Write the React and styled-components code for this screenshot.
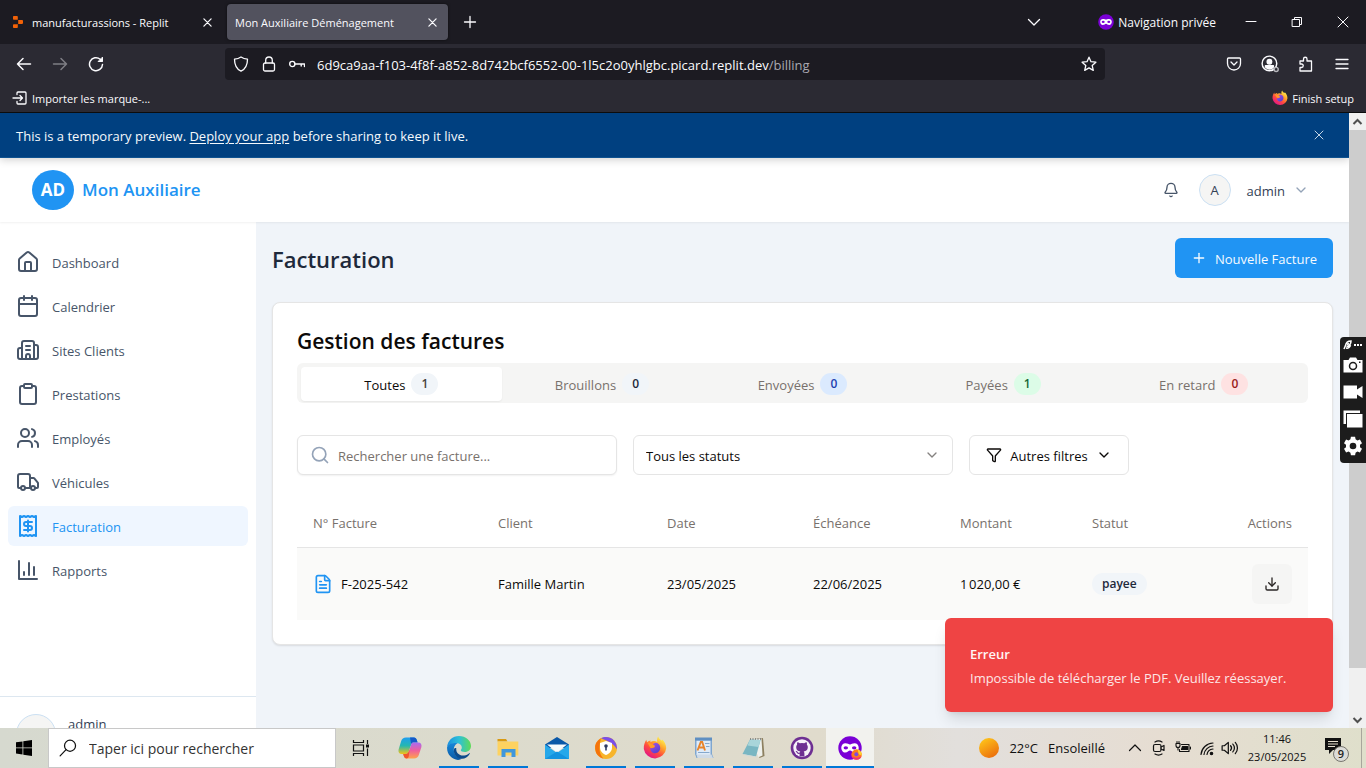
import React from 'react';
import styled, { createGlobalStyle } from 'styled-components';
import {
  House, Calendar, Building2, Clipboard, Users, Truck, Receipt, Bell, ChevronDown,
  Plus, Search, Funnel, FileText, Download, X,
} from 'lucide-react';

const GlobalStyle = createGlobalStyle`
  *, *::before, *::after { box-sizing: border-box; }
  html, body, #root { height: 100%; }
  body {
    margin: 0;
    overflow: hidden;
    font-family: "Segoe UI", "Open Sans", "Noto Sans", sans-serif;
    font-size: 13px;
    line-height: 20px;
    color: #0c0a09;
  }
  button, input, select { font: inherit; color: inherit; }
  button { border: 0; padding: 0; background: none; }
  svg { display: block; flex: none; }
  h1, h2, p { margin: 0; }
`;

const Desktop = styled.div`
  display: flex;
  flex-direction: column;
  height: 100vh;
`;

/* Text beside an icon: the padding lines the letters up with the icon's middle. */
const Label = styled.span`
  padding-top: 2px;
`;

/* ---------- Browser chrome ---------- */

const Chrome = styled.header`
  flex: none;
  background: #2b2a33;
  color: #fbfbfe;
  font-size: 11px;
  border-bottom: 1px solid #0c0c0d;
`;

const TabStrip = styled.div`
  display: flex;
  align-items: center;
  height: 44px;
  background: #1c1b22;
`;

const BrowserTab = styled.div`
  display: flex;
  align-items: center;
  gap: 8px;
  width: ${(p) => (p.$active ? 221 : 223)}px;
  height: 36px;
  padding: 0 8px 0 ${(p) => (p.$active ? 8 : 12)}px;
  margin-right: 4px;
  border-radius: 4px;
  white-space: nowrap;
  background: ${(p) => (p.$active ? '#52525e' : 'transparent')};
  box-shadow: ${(p) => (p.$active ? '0 0 3px rgba(0,0,0,.6)' : 'none')};
`;

const TabLabel = styled(Label)`
  flex: 1;
  overflow: hidden;
`;

const ChromeButton = styled.button`
  display: grid;
  place-items: center;
  width: ${(p) => p.$w || 36}px;
  height: ${(p) => p.$h || 32}px;
  flex: none;
  opacity: ${(p) => (p.$dim ? 0.4 : 1)};
`;

const Spacer = styled.div`
  flex: 1;
`;

const PrivateBadge = styled.div`
  display: flex;
  align-items: center;
  gap: 4px;
  margin: 0 12px 0 46px;
  font-size: 12px;
`;

const NavBar = styled.div`
  display: flex;
  align-items: center;
  height: 40px;
`;

const NavGroup = styled.div`
  display: flex;
  width: 225px;
  padding-left: 6px;
`;

const AddressBar = styled.div`
  flex: 1;
  display: flex;
  align-items: center;
  height: 32px;
  padding: 0 8px;
  gap: 12px;
  border-radius: 4px;
  background: #1c1b22;
`;

const Address = styled.label`
  flex: 1;
  display: flex;
  padding-top: 2px;
  font-size: 13px;
  color: #a9a9b0;
`;

const AddressInput = styled.input`
  field-sizing: content;
  border: 0;
  padding: 0;
  background: none;
  outline: 0;
  color: #fbfbfe;
`;

const NavTools = styled.div`
  display: flex;
  justify-content: flex-end;
  width: 261px;
  padding-right: 6px;
`;

const BookmarkBar = styled.div`
  display: flex;
  align-items: center;
  justify-content: space-between;
  height: 28px;
  padding: 0 12px;
`;

const Bookmark = styled.button`
  display: flex;
  align-items: center;
  gap: 4px;
`;

/* ---------- Page viewport ---------- */

const Viewport = styled.div`
  position: relative;
  flex: 1;
  min-height: 0;
  display: flex;
`;

const Page = styled.div`
  position: relative;
  flex: 1;
  min-width: 0;
  display: flex;
  flex-direction: column;
  overflow: hidden;
  background: #f0f4f9;
`;

const Banner = styled.div`
  position: relative;
  z-index: 2;
  flex: none;
  display: flex;
  align-items: center;
  justify-content: space-between;
  height: 45px;
  padding: 0 20px 0 16px;
  background: #004080;
  border-bottom: 1px solid #0f5391;
  color: #f5f9fc;
  box-shadow: 0 2px 8px rgba(0, 0, 0, 0.18);
  a { color: inherit; text-underline-offset: 2px; }
`;

const BannerClose = styled.button`
  display: grid;
  place-items: center;
  width: 20px;
  height: 20px;
  color: #c5d6e6;
`;

const TopBar = styled.div`
  position: relative;
  z-index: 1;
  flex: none;
  display: flex;
  align-items: center;
  height: 64px;
  padding: 0 40px 0 32px;
  background: #fff;
  box-shadow: 0 1px 2px rgba(0, 0, 0, 0.06);
`;

const Logo = styled.span`
  display: grid;
  place-items: center;
  width: 42px;
  height: 40px;
  border-radius: 50%;
  background: #2094f3;
  color: #fff;
  font-size: 17px;
  font-weight: 700;
`;

const Brand = styled.span`
  margin-left: 8px;
  color: #2094f3;
  font-size: 17px;
  font-weight: 600;
`;

const Avatar = styled.span`
  display: grid;
  place-items: center;
  width: ${(p) => p.$size}px;
  height: ${(p) => p.$size}px;
  border: 1px solid #cbe0f3;
  border-radius: 50%;
  background: #f5f5f4;
  flex: none;
`;

const IconButton = styled.button`
  color: #475569;
  margin-right: 20px;
`;

const UserMenu = styled.button`
  display: flex;
  align-items: center;
  color: #334155;
  ${Label} { margin: 0 8px 0 16px; }
  > svg { color: #94a3b8; }
`;

const Body = styled.div`
  flex: 1;
  min-height: 0;
  display: flex;
`;

/* The sidebar is as tall as the whole app, which the banner pushes down. */
const Sidebar = styled.aside`
  flex: none;
  display: flex;
  flex-direction: column;
  width: 256px;
  height: calc(100% + 45px);
  background: #fff;
`;

const SideNav = styled.nav`
  flex: 1;
  display: flex;
  flex-direction: column;
  gap: 4px;
  padding: 20px 8px;
`;

const SideLink = styled.a`
  display: flex;
  align-items: center;
  gap: 12px;
  height: 40px;
  padding: 0 8px;
  border-radius: 6px;
  text-decoration: none;
  color: ${(p) => (p.$active ? '#2094f3' : '#475569')};
  background: ${(p) => (p.$active ? '#eff6ff' : 'transparent')};
`;

const SideFooter = styled.div`
  display: flex;
  align-items: flex-start;
  gap: 12px;
  height: 77px;
  padding: 17px 16px;
  border-top: 1px solid #dde7f0;
  color: #334155;
`;

const Main = styled.main`
  flex: 1;
  min-width: 0;
  padding: 16px;
`;

const PageHead = styled.div`
  display: flex;
  align-items: center;
  justify-content: space-between;
  margin-bottom: 24px;
`;

const PageTitle = styled.h1`
  padding-top: 2px;
  font-size: 22px;
  line-height: 32px;
  font-weight: 600;
  color: #1e293b;
`;

const PrimaryButton = styled.button`
  display: flex;
  align-items: center;
  gap: 8px;
  height: 40px;
  padding: 0 16px;
  border-radius: 6px;
  background: #2094f3;
  color: #f5faff;
`;

const Card = styled.section`
  padding: 24px;
  border: 1px solid #e5e5e5;
  border-radius: 8px;
  background: #fff;
  box-shadow: 0 1px 2px rgba(0, 0, 0, 0.1);
`;

const CardTitle = styled.h2`
  font-size: 21px;
  line-height: 28px;
  font-weight: 600;
  margin-bottom: 8px;
`;

const Tabs = styled.div`
  display: grid;
  grid-template-columns: repeat(5, 1fr);
  height: 40px;
  padding: 4px 4px 2px;
  border-radius: 6px;
  background: #f5f5f4;
`;

const Tab = styled.button`
  display: flex;
  align-items: center;
  justify-content: center;
  gap: 6px;
  border-radius: 4px;
  color: ${(p) => (p.$active ? '#0c0a09' : '#78716c')};
  background: ${(p) => (p.$active ? '#fff' : 'transparent')};
  box-shadow: ${(p) => (p.$active ? '0 1px 2px rgba(0,0,0,.06)' : 'none')};
`;

const Pill = styled.span`
  display: inline-block;
  padding: 0 10px;
  border-radius: 11px;
  font-size: 12px;
  line-height: 22px;
  font-weight: 600;
  color: ${(p) => p.$fg};
  background: ${(p) => p.$bg};
`;

const Filters = styled.div`
  display: flex;
  gap: 16px;
  margin: 32px 0 24px;
`;

const Field = styled.label`
  display: flex;
  align-items: center;
  gap: 8px;
  width: 320px;
  height: 40px;
  padding: 0 12px;
  border: 1px solid #e5e5e5;
  border-radius: 6px;
  background: #fff;
  box-shadow: ${(p) => (p.$raised ? '0 1px 2px rgba(0,0,0,.06)' : 'none')};
  input, select {
    flex: 1;
    min-width: 0;
    border: 0;
    padding: 2px 0 0;
    outline: 0;
    appearance: none;
    background: none;
  }
  input::placeholder { color: #78716c; opacity: 1; }
`;

const OutlineButton = styled.button`
  display: flex;
  align-items: center;
  justify-content: center;
  gap: 8px;
  width: 160px;
  height: 40px;
  border: 1px solid #e5e5e5;
  border-radius: 6px;
  background: #fff;
`;

const Table = styled.table`
  width: 100%;
  table-layout: fixed;
  border-collapse: collapse;
  text-align: left;
  th {
    height: 48px;
    padding: 0 16px;
    font-weight: 400;
    color: #78716c;
    border-bottom: 1px solid #e5e5e5;
  }
  td {
    height: 73px;
    padding: 0 16px;
    background: #fafaf9;
  }
  th:last-child, td:last-child { text-align: right; }
`;

const InvoiceRef = styled.span`
  display: flex;
  align-items: center;
  gap: 8px;
  svg { color: #2094f3; }
`;

const RowButton = styled.button`
  display: inline-grid;
  place-items: center;
  width: 40px;
  height: 40px;
  vertical-align: middle;
  border-radius: 6px;
  background: #f5f5f4;
  color: #292524;
`;

const Toast = styled.div`
  position: absolute;
  z-index: 3;
  right: 16px;
  bottom: 16px;
  width: 388px;
  padding: 26px 25px 24px;
  border-radius: 6px;
  background: #ef4444;
  color: #fde6e6;
  box-shadow: 0 10px 15px -3px rgba(0, 0, 0, 0.12), 0 4px 6px -4px rgba(0, 0, 0, 0.12);
  strong {
    display: block;
    margin-bottom: 4px;
    font-weight: 600;
    color: #fff5f5;
  }
`;

const ScrollBar = styled.div`
  flex: none;
  display: flex;
  flex-direction: column;
  width: 17px;
  background: #f0f0f0;
  color: #505050;
`;

const ScrollArrow = styled.button`
  display: grid;
  place-items: center;
  height: 17px;
`;

const ScrollTrack = styled.div`
  flex: 1;
`;

const ScrollThumb = styled.div`
  height: calc(93% - 2px);
  background: #cdcdcd;
`;

const Recorder = styled.div`
  position: absolute;
  z-index: 4;
  right: 0;
  top: 224px;
  display: flex;
  flex-direction: column;
  width: 26px;
  height: 126px;
  padding: 2px 0 4px;
  border-radius: 4px 0 0 4px;
  background: #1c1c1c;
  color: #fff;
`;

const RecorderButton = styled.button`
  flex: ${(p) => (p.$small ? '0 0 12px' : 1)};
  display: grid;
  place-items: center;
`;

/* ---------- Taskbar ---------- */

const Taskbar = styled.footer`
  flex: none;
  display: flex;
  align-items: center;
  height: 40px;
  background: linear-gradient(90deg, #d6d9cf 0%, #dcdbcd 35%, #e0dbcc 60%, #e2dfdc 70%, #e6ddd2 85%, #dfdfcb 100%);
  color: #111;
`;

const TaskButton = styled.button`
  position: relative;
  display: grid;
  place-items: center;
  width: ${(p) => p.$w || 49}px;
  height: 40px;
  flex: none;
  background: ${(p) => (p.$active ? '#f2f2ee' : 'none')};
  &::after {
    content: '';
    position: absolute;
    left: ${(p) => (p.$active ? 0 : 5)}px;
    right: ${(p) => (p.$active ? 0 : 4)}px;
    bottom: 0;
    height: 2px;
    background: ${(p) => (p.$running ? '#0078d7' : 'transparent')};
  }
`;

const TaskSearch = styled.label`
  display: flex;
  align-items: center;
  gap: 12px;
  width: 288px;
  height: 40px;
  padding: 0 10px;
  border: 1px solid #c8c8c8;
  background: #fff;
  font-size: 14px;
  input {
    flex: 1;
    min-width: 0;
    border: 0;
    padding: 2px 0 0;
    outline: 0;
    background: none;
  }
  input::placeholder { color: #333; opacity: 1; }
`;

const Weather = styled.button`
  display: flex;
  align-items: center;
  gap: 10px;
  margin-right: 18px;
`;

const Tray = styled.div`
  display: flex;
  align-items: center;
`;

const Clock = styled.button`
  width: 72px;
  font-size: 11px;
  line-height: 18px;
  text-align: center;
  span { display: block; }
`;

const ShowDesktop = styled.button`
  width: 5px;
  height: 40px;
  border-left: 1px solid #a8a69c;
`;

/* ---------- Drawings ---------- */

const Line = ({ size = 16, w = 1.3, children, ...rest }) => (
  <svg width={size} height={size} viewBox="0 0 16 16" fill="none" stroke="currentColor"
    strokeWidth={w} strokeLinecap="round" strokeLinejoin="round" aria-hidden="true" {...rest}>
    {children}
  </svg>
);

const ReplitMark = () => (
  <svg width="12" height="12" viewBox="0 0 12 12" fill="#f26207" aria-hidden="true">
    <path d="M1.800 0h3.200c.5 0 .8.3.8.8v2.900H1.800a.8.8 0 0 1-.8-.8V.8c0-.5.3-.8.8-.8zM6.200 4.100h4c.5 0 .8.3.8.8v2.200c0 .5-.3.8-.8.8h-4zM1.800 8.300h4v2.900c0 .5-.3.8-.8.8H1.800a.8.8 0 0 1-.8-.8V9.100c0-.5.3-.8.8-.8z" />
  </svg>
);

const CloseMark = ({ size = 9, w = 1.4 }) => (
  <svg width={size} height={size} viewBox="0 0 10 10" stroke="currentColor" strokeWidth={w} strokeLinecap="round" aria-hidden="true">
    <path d="M1 1l8 8M9 1L1 9" />
  </svg>
);

const MaskMark = ({ size = 16, fox }) => (
  <svg width={size} height={size} viewBox="0 0 16 16" aria-hidden="true">
    <circle cx="8" cy="8" r="7.800" fill="#7a00d6" />
    <path d="M5 4.900c1.400 0 2.200.7 3 .7s1.600-.7 3-.7c1.700 0 2.800 1.300 2.800 2.900S12.700 11 11.200 11C9.600 11 9 9.700 8 9.700S6.400 11 4.800 11C3.300 11 2.200 9.400 2.200 7.800S3.300 4.900 5 4.900z" fill="#fff" />
    <ellipse cx="5.200" cy="7.900" rx="1.500" ry="1.100" fill="#7a00d6" />
    <ellipse cx="10.800" cy="7.900" rx="1.500" ry="1.100" fill="#7a00d6" />
    {fox && (
      <g>
        <circle cx="12.400" cy="12.400" r="3.500" fill="#ff7a1c" />
        <path d="M13 8.600c2 1 3 2.500 2.900 4.200l-2-.4z" fill="#ffcf2e" />
        <path d="M9.100 13.500a3.500 3.500 0 0 0 6.500.2c-2 1-4.500 1-6.500-.2z" fill="#f0307a" />
        <circle cx="12.200" cy="12.200" r="1.300" fill="#7b4be0" />
      </g>
    )}
  </svg>
);

const FoxMark = ({ size = 16, id }) => (
  <svg width={size} height={size} viewBox="0 0 24 24" aria-hidden="true">
    <defs>
      <linearGradient id={`${id}a`} x1=".85" y1=".1" x2=".25" y2=".95">
        <stop offset="0" stopColor="#fff44f" />
        <stop offset=".35" stopColor="#ffa02b" />
        <stop offset=".65" stopColor="#ff4a3f" />
        <stop offset="1" stopColor="#e31587" />
      </linearGradient>
      <linearGradient id={`${id}b`} x1="0" y1="0" x2=".6" y2="1">
        <stop offset="0" stopColor="#a253e8" />
        <stop offset="1" stopColor="#5a3fd0" />
      </linearGradient>
    </defs>
    <path d="M15.200.6c.6 2 1.800 2.800 3.400 4 .4-.2.600-.6.600-1.200 2.500 2.200 4 5.400 4 8.800A11.300 11.300 0 0 1 .8 12.900C.5 9.200 2 5.800 3.300 3.800c.1 1 .5 1.900 1 2.400C5.400 5 6.600 4.600 8 4.700c-.5.4-.8.900-.8 1.500 2.500-1.500 5-1.600 7-.2-.4-2 .1-4.200 1-5.400z" fill={`url(#${id}a)`} />
    <path d="M12.500 6.800c3 .3 4.900 2.700 4.700 5.500-.2 3-2.600 5-5.300 4.900-3-.1-4.900-2.600-4.600-5.300 1.500.9 2.700.3 4.200-.6.500-.6-.4-1.300-1.800-1.600.2-1.300 1.200-2.600 2.800-2.900z" fill={`url(#${id}b)`} />
    <path d="M4.300 6.200c2 .6 4 1.300 7.300 3.200.7.500.2 1.400-.6 1.800-1.200.6-2.500 1-3.700.5" fill="#ff9a2a" />
  </svg>
);

const PageArrow = ({ up }) => (
  <svg width="11" height="8" viewBox="0 0 11 8" fill="none" stroke="currentColor" strokeWidth="2" aria-hidden="true">
    <path d={up ? 'M1.500 6L5.500 2l4 4' : 'M1.500 2l4 4 4-4'} />
  </svg>
);

const BarChartMark = () => (
  <svg width="24" height="24" viewBox="0 0 24 24" fill="none" stroke="currentColor" strokeWidth="2" strokeLinecap="round" strokeLinejoin="round" aria-hidden="true">
    <path d="M3 3v18h18M18 17V9M13 17V5M8 17v-3" />
  </svg>
);

const CopilotMark = () => (
  <svg width="24" height="24" viewBox="0 0 24 24" aria-hidden="true">
    <defs>
      <linearGradient id="cpA" x1="0" y1="0" x2="0" y2="1">
        <stop offset="0" stopColor="#1f9df0" /><stop offset=".5" stopColor="#25b8b0" /><stop offset="1" stopColor="#f2c318" />
      </linearGradient>
      <linearGradient id="cpB" x1="0" y1="0" x2="0" y2="1">
        <stop offset="0" stopColor="#a86cf2" /><stop offset=".5" stopColor="#ef5f9c" /><stop offset="1" stopColor="#ffa24a" />
      </linearGradient>
    </defs>
    <path d="M8 1.500h8c1.500 0 2.300 1 2.800 2.500l.8 2.500h-4c-1.200 0-2 .6-2.400 1.900L11 15c-.7 2-1.600 3-3.500 3H3.800C1.200 18 0 16 .6 13.400L3.200 5C4 2.700 5.300 1.500 8 1.500z" fill="url(#cpA)" />
    <path d="M12 1.500h4c1.500 0 2.300 1 2.800 2.500l.8 2.500h-4c-1.200 0-2 .6-2.400 1.900z" fill="#1559c8" />
    <path d="M16 22.500H8.500c-1.500 0-2.200-1-2.700-2.500L5.200 18h2.300c1.900 0 2.800-1 3.500-3l2.200-6.600c.4-1.300 1.200-1.900 2.400-1.900h4.600c2.600 0 3.800 2 3.200 4.600L20.800 19c-.8 2.300-2.100 3.500-4.800 3.500z" fill="url(#cpB)" />
    <path d="M5.200 18h2.300c1.900 0 2.800-1 3.500-3l.6-1.600-.8 6.600c-.2 1.600-.8 2.500-2.300 2.500s-2.200-1-2.700-2.500z" fill="#f0562b" />
  </svg>
);

const EdgeMark = () => (
  <svg width="24" height="24" viewBox="0 0 24 24" aria-hidden="true">
    <defs>
      <linearGradient id="edA" x1="0" y1=".3" x2="1" y2=".3">
        <stop offset="0" stopColor="#1a8fe0" /><stop offset=".5" stopColor="#2dc0d8" /><stop offset="1" stopColor="#5fdb55" />
      </linearGradient>
      <linearGradient id="edB" x1="0" y1="0" x2="0" y2="1">
        <stop offset="0" stopColor="#1687d9" /><stop offset="1" stopColor="#0c59a4" />
      </linearGradient>
    </defs>
    <path d="M.1 11C.6 4.500 5.700 0 12 0c6.800 0 12 4.500 12 10 0 3.700-2.800 6-6.200 6-2.500 0-4-.8-4-1.700 0-.6 1-1 1-2.800 0-2.200-2-4.200-5.300-4.200C5 7.300 1.300 8.800.1 11z" fill="url(#edA)" />
    <path d="M.1 11c1-2.500 4-4 7.500-4 1 0 2 .1 3 .5-2.500.8-4 3.500-3.800 6.500.2 4.200 3.500 8 8.200 8.500-1 .9-2.300 1.300-4 1.400C5 23.600-.5 18.500.1 11z" fill="url(#edB)" />
    <path d="M9.300 12.300c-.7 4.700 3.500 7.900 8 7.200 2-.3 3.700-1.200 5-2.300.4-.3.800.1.500.5-2 3.300-4.700 5-7.800 5-5 0-8.200-4.200-8.200-8.200 0-2 .9-3.200 2.500-2.200z" fill="#0d4c8c" />
  </svg>
);

const FolderMark = () => (
  <svg width="24" height="24" viewBox="0 0 24 24" aria-hidden="true">
    <path d="M1.500 3h8.500l1.500 2.500h-10z" fill="#d99a12" />
    <path d="M1.500 5.500h20.800v14H1.500z" fill="#fdd260" />
    <path d="M5.500 13h14v8h-4v-4.500h-6V21h-4z" fill="#3f97dc" />
  </svg>
);

const MailMark = () => (
  <svg width="26" height="24" viewBox="0 0 26 24" aria-hidden="true">
    <path d="M1 8.500L13 1l12 7.500V12H1z" fill="#0a58a8" />
    <path d="M3 8.500h20l-10 8z" fill="#f7fafc" />
    <path d="M1 8.500L13 17l12-8.500V23H1z" fill="#26a8ea" />
    <path d="M1 23l12-7.500L25 23z" fill="#1493df" />
  </svg>
);

const ShieldBrowserMark = () => (
  <svg width="24" height="24" viewBox="0 0 24 24" aria-hidden="true">
    <circle cx="12" cy="12" r="11" fill="#f7b52c" />
    <path d="M12 1a11 11 0 0 1 10.900 12.300C20 8 15 5.500 7 2.300 8.500 1.500 10.200 1 12 1z" fill="#7a4fe8" />
    <path d="M7 2.300A11 11 0 0 0 9.500 22.700C5 18 4.500 12 7 2.300z" fill="#f5740d" />
    <path d="M12 5l6 2v4.500c0 3.500-2.500 6-6 7.500-3.500-1.500-6-4-6-7.500V7z" fill="#fff" />
    <circle cx="12" cy="10" r="1.800" fill="#2d3b63" />
    <path d="M11.200 10.500h1.600v4h-1.600z" fill="#2d3b63" />
  </svg>
);

const WordPadMark = () => (
  <svg width="24" height="24" viewBox="0 0 24 24" aria-hidden="true">
    <path d="M3 2h17v16l1.500 4H4.500L3 18z" fill="#7fa6cf" />
    <path d="M4.500 4.500h14V19h-14z" fill="#dfebf8" />
    <path d="M3 1.500h17v3H3z" fill="#5f8fc2" />
    <path d="M5.500 14.500L8.800 6h1.400l2.800 8.500M7 11.500h4.500" stroke="#e8842c" strokeWidth="1.900" fill="none" />
    <path d="M13 7.500h4.500M14 10.500h3.500M6 16.500h11.500" stroke="#86a8cc" />
    <path d="M4.500 18.500h15L21 22H5.500z" fill="#cfdae6" />
  </svg>
);

const NotepadMark = () => (
  <svg width="24" height="24" viewBox="0 0 24 24" aria-hidden="true">
    <path d="M10 3.500L22 2l1.500 18-5 2z" fill="#8d8061" />
    <path d="M9.500 3.500l11-1 1 17-4 1.800z" fill="#eef0ec" />
    <path d="M9 3.500L19.500 4 15 20.500 1.500 18z" fill="#79b6c2" />
    <path d="M9 3.500L19.500 4l-2 7-11-1.500z" fill="#a9d5da" />
    <path d="M1.500 18L15 20.500l2.500 1-12-1.500z" fill="#cfd9d8" />
    <path d="M9.500 2v2M12 2v2M14.500 2v2M17 2v2M19.500 2v2" stroke="#777" strokeWidth=".8" />
  </svg>
);

const GitHubDesktopMark = () => (
  <svg width="24" height="24" viewBox="0 0 24 24" aria-hidden="true">
    <circle cx="12" cy="12" r="11.300" fill="#6e2f92" />
    <circle cx="12" cy="12" r="8.700" fill="#f6f1f9" />
    <path d="M9.600 20.300v-2.500c-2 .4-2.700-.6-3.200-1.700-.3-.5-.8-.8-.8-.9.900-.5 1.700.3 2.200 1 .5.700 1.200.7 1.900.4.100-.5.300-.9.600-1.100-2.300-.3-4.100-1.200-4.100-4.400 0-1 .3-1.800.9-2.400-.1-.6-.1-1.500.2-2.400.9 0 1.700.4 2.500 1a8 8 0 0 1 4.400 0c.8-.6 1.600-1 2.500-1 .3.900.3 1.800.2 2.400.6.600.9 1.400.9 2.400 0 3.200-1.800 4.100-4.100 4.400.4.400.7 1 .7 1.800v3z" fill="#6e2f92" />
  </svg>
);

const tasks = [
  ['Copilot', <CopilotMark />, false],
  ['Microsoft Edge', <EdgeMark />, true],
  ['Explorateur de fichiers', <FolderMark />, true],
  ['Courrier', <MailMark />, false],
  ['Navigateur sécurisé', <ShieldBrowserMark />, true],
  ['Firefox', <FoxMark size={24} id="foxTask" />, true],
  ['WordPad', <WordPadMark />, true],
  ['Bloc-notes', <NotepadMark />, true],
  ['GitHub Desktop', <GitHubDesktopMark />, true],
];

const links = [
  ['Dashboard', <House size={24} />],
  ['Calendrier', <Calendar size={24} />],
  ['Sites Clients', <Building2 size={24} />],
  ['Prestations', <Clipboard size={24} />],
  ['Employés', <Users size={24} />],
  ['Véhicules', <Truck size={24} />],
  ['Facturation', <Receipt size={24} />],
  ['Rapports', <BarChartMark />],
];

const tabs = [
  ['Toutes', 1, '#f1f5f9', '#44403c'],
  ['Brouillons', 0, '#f1f5f9', '#1e293b'],
  ['Envoyées', 0, '#dbeafe', '#1e40af'],
  ['Payées', 1, '#dcfce7', '#166534'],
  ['En retard', 0, '#fee2e2', '#991b1b'],
];

const columns = [
  ['N° Facture', 185], ['Client', 169], ['Date', 146], ['Échéance', 147],
  ['Montant', 132], ['Statut', 132], ['Actions', 100],
];

function BrowserChrome() {
  return (
    <Chrome>
      <TabStrip>
        <BrowserTab>
          <ReplitMark />
          <TabLabel>manufacturassions - Replit</TabLabel>
          <ChromeButton $w={16} aria-label="Fermer l’onglet"><CloseMark /></ChromeButton>
        </BrowserTab>
        <BrowserTab $active>
          <TabLabel>Mon Auxiliaire Déménagement</TabLabel>
          <ChromeButton $w={16} aria-label="Fermer l’onglet"><CloseMark /></ChromeButton>
        </BrowserTab>
        <ChromeButton aria-label="Nouvel onglet"><Line><path d="M8 2.500v11M2.500 8h11" /></Line></ChromeButton>
        <Spacer />
        <ChromeButton aria-label="Lister les onglets"><Line><path d="M2.500 5.500L8 11l5.500-5.500" /></Line></ChromeButton>
        <PrivateBadge><MaskMark /><Label>Navigation privée</Label></PrivateBadge>
        <ChromeButton $w={46} aria-label="Réduire"><Line w={1}><path d="M3 7.500h10" /></Line></ChromeButton>
        <ChromeButton $w={46} aria-label="Restaurer"><Line w={1}><path d="M3.500 5.500h7v7h-7zM5.500 5.500v-2h7v7h-2" /></Line></ChromeButton>
        <ChromeButton $w={46} aria-label="Fermer"><Line w={1}><path d="M3 3l10 10M13 3L3 13" /></Line></ChromeButton>
      </TabStrip>
      <NavBar>
        <NavGroup>
          <ChromeButton aria-label="Précédent"><Line w={1.5}><path d="M14.500 8h-13M7 2.500L1.500 8 7 13.500" /></Line></ChromeButton>
          <ChromeButton $dim aria-label="Suivant"><Line w={1.5}><path d="M1.500 8h13M9 2.500L14.500 8 9 13.500" /></Line></ChromeButton>
          <ChromeButton aria-label="Actualiser"><Line w={1.5}><path d="M14.500 8.500a6.500 6.500 0 1 1-2.300-5.300L14 5" /><path d="M14.500 1.500v4h-4z" fill="currentColor" strokeWidth="1" /></Line></ChromeButton>
        </NavGroup>
        <AddressBar>
          <Line><path d="M8 1c2 1.400 4 2 6.500 2.200C14.500 9 12.500 13 8 15.200 3.500 13 1.500 9 1.500 3.200 4 3 6 2.400 8 1z" /></Line>
          <Line><rect x="2.500" y="7" width="11" height="8" rx="1.500" /><path d="M4.700 7V4.300a3.300 3.300 0 0 1 6.600 0V7" /></Line>
          <Line w={1.4}><circle cx="3.300" cy="8" r="2.600" /><path d="M6 8h9.500v2.500M12.200 8v2" /></Line>
          <Address>
            <AddressInput aria-label="Adresse" defaultValue="6d9ca9aa-f103-4f8f-a852-8d742bcf6552-00-1l5c2o0yhlgbc.picard.replit.dev" />
            <span>/billing</span>
          </Address>
          <Line><path d="M8 1.200l2 4.500 4.900.5-3.700 3.300 1.100 4.900L8 11.900l-4.300 2.500 1.100-4.900L1.100 6.200 6 5.700z" /></Line>
        </AddressBar>
        <NavTools>
          <ChromeButton aria-label="Pocket"><Line><path d="M2.500 2h11c.6 0 1 .4 1 1v4.500a6.500 6.500 0 0 1-13 0V3c0-.6.400-1 1-1z" /><path d="M5 6l3 3 3-3" /></Line></ChromeButton>
          <ChromeButton aria-label="Compte">
            <Line size={18}><circle cx="7.500" cy="7.500" r="6.500" /><circle cx="7.500" cy="6" r="2" fill="currentColor" /><path d="M4 9.500h7v1.200a4.500 4.500 0 0 1-7 0z" fill="currentColor" /><circle cx="13.500" cy="12.800" r="1.800" stroke="#b5b5bb" fill="#2b2a33" /></Line>
          </ChromeButton>
          <ChromeButton aria-label="Extensions"><Line><path d="M2 15V11.500h1.500a1.700 1.700 0 0 0 0-3.500H2V5h3.500V3a1.700 1.700 0 0 1 3.500 0v2h4.500v10z" /></Line></ChromeButton>
          <ChromeButton aria-label="Menu"><Line><path d="M2 3.500h12M2 8h12M2 12.500h12" /></Line></ChromeButton>
        </NavTools>
      </NavBar>
      <BookmarkBar>
        <Bookmark>
          <Line><path d="M5 4.500V3a1 1 0 0 1 1-1h7a1 1 0 0 1 1 1v10a1 1 0 0 1-1 1H6a1 1 0 0 1-1-1v-1.500M1 8h9M8 5.500L10.500 8 8 10.500" /></Line>
          <Label>Importer les marque-...</Label>
        </Bookmark>
        <Bookmark><FoxMark id="foxSetup" /><Label>Finish setup</Label></Bookmark>
      </BookmarkBar>
    </Chrome>
  );
}

function Invoices() {
  return (
    <Main>
      <PageHead>
        <PageTitle>Facturation</PageTitle>
        <PrimaryButton><Plus size={16} /><Label>Nouvelle Facture</Label></PrimaryButton>
      </PageHead>
      <Card>
        <CardTitle>Gestion des factures</CardTitle>
        <Tabs role="tablist">
          {tabs.map(([label, count, bg, fg], i) => (
            <Tab key={label} role="tab" aria-selected={i === 0} $active={i === 0}>
              <Label>{label}</Label><Pill $bg={bg} $fg={fg}>{count}</Pill>
            </Tab>
          ))}
        </Tabs>
        <Filters>
          <Field $raised>
            <Search size={20} color="#94a3b8" />
            <input type="search" placeholder="Rechercher une facture..." aria-label="Rechercher une facture" />
          </Field>
          <Field>
            <select aria-label="Statut"><option>Tous les statuts</option></select>
            <ChevronDown size={16} color="#858280" />
          </Field>
          <OutlineButton><Funnel size={16} /><Label>Autres filtres</Label><ChevronDown size={16} /></OutlineButton>
        </Filters>
        <Table>
          <colgroup>{columns.map(([name, width]) => <col key={name} width={width} />)}</colgroup>
          <thead>
            <tr>{columns.map(([name]) => <th key={name} scope="col">{name}</th>)}</tr>
          </thead>
          <tbody>
            <tr>
              <td><InvoiceRef><FileText size={20} />F-2025-542</InvoiceRef></td>
              <td>Famille Martin</td>
              <td>23/05/2025</td>
              <td>22/06/2025</td>
              <td>1&#8239;020,00 €</td>
              <td><Pill $bg="#f1f5f9" $fg="#1e293b">payee</Pill></td>
              <td><RowButton aria-label="Télécharger"><Download size={16} /></RowButton></td>
            </tr>
          </tbody>
        </Table>
      </Card>
    </Main>
  );
}

function RecorderPanel() {
  return (
    <Recorder>
      <RecorderButton $small aria-label="Options">
        <svg width="20" height="10" viewBox="0 0 20 10" fill="none" stroke="currentColor">
          <path d="M1 9l1.500-3.500C3 2.500 5 1 8 1c0 3-1.500 5-4.500 5.500M3 8c2 .5 4-.5 4.500-3M4 4.500l2-1" strokeWidth="1.500" />
          <path d="M11 5h2M14 5h2M17 5h2" strokeWidth="2" />
        </svg>
      </RecorderButton>
      <RecorderButton aria-label="Capture d’écran">
        <svg width="20" height="16" viewBox="0 0 20 16">
          <path d="M.5 3h5l1.500-2.500h6L14.500 3h5v12.500H.5z" fill="#fff" />
          <circle cx="10" cy="9" r="3.500" fill="#fff" stroke="#1c1c1c" strokeWidth="1.500" /><path d="M16 4.500h1.500v1.500H16z" fill="#1c1c1c" />
        </svg>
      </RecorderButton>
      <RecorderButton aria-label="Vidéo">
        <svg width="20" height="14" viewBox="0 0 20 14" fill="#fff"><path d="M.5.5H14v4l5.500-3.500v12L14 9.500v4H.5z" /></svg>
      </RecorderButton>
      <RecorderButton aria-label="Galerie">
        <svg width="20" height="18" viewBox="0 0 20 18" fill="#fff"><path d="M.5.500H17V3H3v11H.5z" /><path d="M4 4h15.500v13.500H4z" /></svg>
      </RecorderButton>
      <RecorderButton aria-label="Paramètres">
        <svg width="20" height="20" viewBox="0 0 24 24" fill="#fff">
          <path fillRule="evenodd" d="M9.500 1h5l.6 3 2.200 1.300 3-1 2.500 4.300-2.400 2v2.800l2.400 2-2.500 4.300-3-1-2.200 1.300-.6 3h-5l-.6-3-2.200-1.300-3 1-2.500-4.300 2.400-2v-2.800l-2.400-2 2.500-4.300 3 1L8.900 4zM12 8a4 4 0 1 0 0 8 4 4 0 0 0 0-8z" />
        </svg>
      </RecorderButton>
    </Recorder>
  );
}

function WindowsTaskbar() {
  return (
    <Taskbar>
      <TaskButton $w={48} aria-label="Démarrer">
        <svg width="16" height="16" viewBox="0 0 16 16"><path d="M0 2.300L6.500 1.400v6.100H0zM7.300 1.300L16 0v7.500H7.300zM0 8.300h6.500v6.200L0 13.600zM7.300 8.300H16V16l-8.700-1.300z" /></svg>
      </TaskButton>
      <TaskSearch>
        <Line size={18} w={1.1}><circle cx="9.800" cy="6" r="4.900" /><path d="M6.300 9.500L1 15" /></Line>
        <input placeholder="Taper ici pour rechercher" aria-label="Taper ici pour rechercher" />
      </TaskSearch>
      <TaskButton aria-label="Affichage des tâches">
        <svg width="18" height="16" viewBox="0 0 18 16" fill="none" stroke="#111" strokeWidth="1.200"><path d="M1.500 0v2.500h10V0M1.500 16v-2.500h10V16M1.500 5h10v6h-10zM15.500 0v4M15.500 8.500V16" /><path d="M14 4.500h3v3h-3z" fill="#111" stroke="none" /></svg>
      </TaskButton>
      {tasks.map(([name, icon, running]) => (
        <TaskButton key={name} aria-label={name} $running={running}>{icon}</TaskButton>
      ))}
      <TaskButton $w={48} aria-label="Firefox, navigation privée" $running $active><MaskMark size={24} fox /></TaskButton>
      <Spacer />
      <Weather>
        <svg width="20" height="20" viewBox="0 0 20 20">
          <defs><linearGradient id="sun" x1=".2" y1="0" x2=".8" y2="1"><stop offset="0" stopColor="#ffc61a" /><stop offset="1" stopColor="#ea6a0c" /></linearGradient></defs>
          <circle cx="10" cy="10" r="10" fill="url(#sun)" />
        </svg>
        <span>22°C</span><span>Ensoleillé</span>
      </Weather>
      <Tray>
        <ChromeButton $w={24} aria-label="Icônes cachées"><Line w={1.2}><path d="M2.500 10.500L8 5l5.500 5.500" /></Line></ChromeButton>
        <ChromeButton $w={24} aria-label="Réunion"><Line w={1.2}><rect x="2.500" y="4.500" width="7.500" height="7" rx="1.500" /><path d="M10 7l3-1.500v5L10 9M4 2c2-1.200 5-1.200 7 0M4 14c2 1.200 5 1.200 7 0" /></Line></ChromeButton>
        <ChromeButton $w={24} aria-label="Batterie"><Line w={1.1}><path d="M6.500 4.500H14v7H4.500V9.500" /><path d="M7.500 6.500h5v3H6.500z" fill="currentColor" /><path d="M15.500 7v2M1 3.500h4v2a2 2 0 0 1-4 0zM2 3.500V1.500M4 3.500V1.500M3 7.500V10" /></Line></ChromeButton>
        <ChromeButton $w={24} aria-label="Wi-Fi"><Line w={1.2}><path d="M2 14.500A12.500 12.500 0 0 1 14 3M5 14.500a9.500 9.500 0 0 1 9-8.500M8 14.500A6.500 6.500 0 0 1 14 9" /><circle cx="12.500" cy="13.500" r="1.200" fill="currentColor" /></Line></ChromeButton>
        <ChromeButton $w={22} aria-label="Volume"><Line size={18} w={1.1}><path d="M1 6v4h2l3.500 3V3L3 6zM8.500 6a3 3 0 0 1 0 4M10.500 4.500a5 5 0 0 1 0 7M12.700 3a7.500 7.500 0 0 1 0 10" /></Line></ChromeButton>
        <Clock><span>11:46</span><span>23/05/2025</span></Clock>
        <ChromeButton $w={48} aria-label="9 notifications">
          <svg width="26" height="28" viewBox="0 0 26 28">
            <path d="M1 4h16v12H9l-4 4v-4H1z" fill="#111" /><path d="M4 7.500h10M4 10h10M4 12.500h7" stroke="#e6e0cf" />
            <circle cx="17" cy="20" r="7.500" fill="#dcdcd8" stroke="#77756e" />
            <text x="17" y="24" textAnchor="middle" fontSize="11" fontWeight="600" fill="#222">9</text>
          </svg>
        </ChromeButton>
        <ShowDesktop aria-label="Afficher le bureau" />
      </Tray>
    </Taskbar>
  );
}

export default function App() {
  return (
    <Desktop>
      <GlobalStyle />
      <BrowserChrome />
      <Viewport>
        <Page>
          <Banner>
            <Label as="p">This is a temporary preview. <a href="#deploy">Deploy your app</a> before sharing to keep it live.</Label>
            <BannerClose aria-label="Fermer"><X size={16} strokeWidth={1.5} /></BannerClose>
          </Banner>
          <TopBar>
            <Logo>AD</Logo>
            <Brand>Mon Auxiliaire</Brand>
            <Spacer />
            <IconButton aria-label="Notifications"><Bell size={16} /></IconButton>
            <UserMenu>
              <Avatar $size={32}>A</Avatar>
              <Label>admin</Label>
              <ChevronDown size={16} />
            </UserMenu>
          </TopBar>
          <Body>
            <Sidebar>
              <SideNav>
                {links.map(([label, icon]) => (
                  <SideLink key={label} href={`#${label}`} $active={label === 'Facturation'}>{icon}<Label>{label}</Label></SideLink>
                ))}
              </SideNav>
              <SideFooter><Avatar $size={40} /><span>admin</span></SideFooter>
            </Sidebar>
            <Invoices />
          </Body>
          <Toast role="alert">
            <strong>Erreur</strong>
            <p>Impossible de télécharger le PDF. Veuillez réessayer.</p>
          </Toast>
        </Page>
        <ScrollBar>
          <ScrollArrow aria-label="Défiler vers le haut"><PageArrow up /></ScrollArrow>
          <ScrollTrack><ScrollThumb /></ScrollTrack>
          <ScrollArrow aria-label="Défiler vers le bas"><PageArrow /></ScrollArrow>
        </ScrollBar>
        <RecorderPanel />
      </Viewport>
      <WindowsTaskbar />
    </Desktop>
  );
}
